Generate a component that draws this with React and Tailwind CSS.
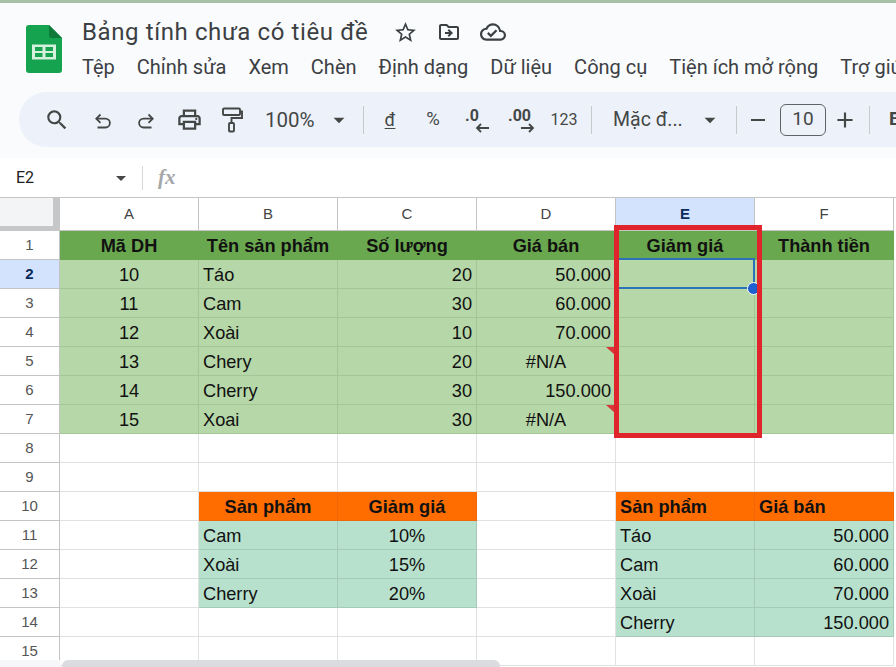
import React from "react";
import { MdSearch, MdOutlinePrint, MdStarBorder, MdOutlineDriveFileMove, MdOutlineCloudDone, MdArrowDropDown, MdRemove, MdAdd } from "react-icons/md";

const ui = "font-['Roboto','Noto_Sans',sans-serif]";
const G = "bg-[#6aa84f] border-[#6aa84f]";
const L = "bg-[#b6d7a8] border-[#a3c696]";
const O = "bg-[#ff6d01] border-[#f0660a]";
const M = "bg-[#b7e1cd] border-[#a4cbb8]";
const W = "bg-white border-[#e1e1e1]";

const c = (t, bg = W, al = "l", b = false) => ({ t, bg, al, b });
const e = { t: "", bg: W, al: "l", b: false };
const rows = [
  [c("Mã DH", G, "c", 1), c("Tên sản phẩm", G, "c", 1), c("Số lượng", G, "c", 1), c("Giá bán", G, "c", 1), c("Giảm giá", G, "c", 1), c("Thành tiền", G, "c", 1)],
  [c("10", L, "c"), c("Táo", L), c("20", L, "r"), c("50.000", L, "r"), c("", L), c("", L)],
  [c("11", L, "c"), c("Cam", L), c("30", L, "r"), c("60.000", L, "r"), c("", L), c("", L)],
  [c("12", L, "c"), c("Xoài", L), c("10", L, "r"), c("70.000", L, "r"), c("", L), c("", L)],
  [c("13", L, "c"), c("Chery", L), c("20", L, "r"), c("#N/A", L, "c"), c("", L), c("", L)],
  [c("14", L, "c"), c("Cherry", L), c("30", L, "r"), c("150.000", L, "r"), c("", L), c("", L)],
  [c("15", L, "c"), c("Xoai", L), c("30", L, "r"), c("#N/A", L, "c"), c("", L), c("", L)],
  [e, e, e, e, e, e],
  [e, e, e, e, e, e],
  [e, c("Sản phẩm", O, "c", 1), c("Giảm giá", O, "c", 1), e, c("Sản phẩm", O, "l", 1), c("Giá bán", O, "l", 1)],
  [e, c("Cam", M), c("10%", M, "c"), e, c("Táo", M), c("50.000", M, "r")],
  [e, c("Xoài", M), c("15%", M, "c"), e, c("Cam", M), c("60.000", M, "r")],
  [e, c("Cherry", M), c("20%", M, "c"), e, c("Xoài", M), c("70.000", M, "r")],
  [e, e, e, e, c("Cherry", M), c("150.000", M, "r")],
  [e, e, e, e, e, e],
];

function Logo() {
  return (
    <svg width="36" height="48" viewBox="0 0 36 48" className="shrink-0">
      <path d="M3 0H23L36 13V45a3 3 0 0 1-3 3H3a3 3 0 0 1-3-3V3a3 3 0 0 1 3-3Z" fill="#16a34f" />
      <path d="M23 0L36 13H26a3 3 0 0 1-3-3Z" fill="#0f7a3a" />
      <path d="M6 19.500H30V34.500H6ZM9 22V26H16.500V22ZM19.500 22V26H27V22ZM9 28V32H16.500V28ZM19.500 28V32H27V28Z" fill="#d5f0dd" fillRule="evenodd" />
    </svg>
  );
}
const Sep = ({ cls = "" }) => <div className={"w-px h-[28px] bg-[#c7c9cc] shrink-0 " + cls} />;
const Slot = ({ children, w = "w-[43px]" }) => <div className={"h-full flex items-center justify-center shrink-0 text-[#444746] " + w}>{children}</div>;

function Undo({ flip }) {
  return (
    <svg width="20" height="20" viewBox="0 0 20 20" fill="none" stroke="#444746" strokeWidth="1.800" className={"translate-y-[1px] " + (flip ? "-scale-x-100" : "")}>
      <path d="M7.500 3.500L3.300 7.700L7.500 11.900" />
      <path d="M3.500 7.700H12.500a4.300 4.300 0 0 1 0 8.800H4.500" />
    </svg>
  );
}
function Roller() {
  return (
    <svg width="22" height="26" viewBox="0 0 22 26" fill="none" stroke="#444746" strokeWidth="1.900">
      <rect x="2" y="1.500" width="17" height="6.500" rx="1" />
      <path d="M19 4.500H21V11H10.500V16" />
      <rect x="8" y="16" width="5" height="8.500" rx="1" />
    </svg>
  );
}
function Dec({ label, right }) {
  return (
    <div className="relative w-[30px] h-[30px] text-[#444746]">
      <span className={"absolute top-0 font-bold text-[16px] leading-[22px] " + (right ? "left-[4px]" : "left-[5px]")}>{label}</span>
      <svg width="14" height="10" viewBox="0 0 14 10" className={"absolute top-[18px] " + (right ? "left-[17px]" : "left-[15px]")} fill="none" stroke="#444746" strokeWidth="1.800">
        {right ? <path d="M0 5H12M8 1L12 5L8 9" /> : <path d="M14 5H2M6 1L2 5L6 9" />}
      </svg>
    </div>
  );
}

function Chrome() {
  return (
    <div className={"h-[158px] bg-[#f9fbfd] border-t-[3px] border-[#a9c2a7] overflow-hidden " + ui}>
      <div className="flex h-[89px]">
        <div className="w-[82px] pl-[26px] pt-[22px] shrink-0"><Logo /></div>
        <div className="flex flex-col whitespace-nowrap text-[#3c4043]">
          <div className="flex items-center h-[34px] mt-[12px]">
            <span className="text-[24px] leading-none tracking-[0.6px] w-[286px]">Bảng tính chưa có tiêu đề</span>
            <MdStarBorder className="ml-[25px] text-[#3c4043]" size={25} />
            <MdOutlineDriveFileMove className="ml-[19px]" size={24} />
            <MdOutlineCloudDone className="ml-[19px]" size={26} />
          </div>
          <div className="flex text-[20px] leading-[24px] mt-[6px] gap-[22px]">
            <span>Tệp</span><span>Chỉnh sửa</span><span>Xem</span><span>Chèn</span><span>Định dạng</span><span>Dữ liệu</span><span>Công cụ</span><span>Tiện ích mở rộng</span><span>Trợ giúp</span>
          </div>
        </div>
      </div>
      <div className="ml-[19px] h-[55px] bg-[#edf2fa] rounded-l-[28px] flex items-center pl-[16px] overflow-hidden whitespace-nowrap text-[#444746]">
        <Slot><MdSearch size={26} /></Slot>
        <Slot w="w-[50px]"><Undo /></Slot>
        <Slot w="w-[36px]"><Undo flip /></Slot>
        <Slot w="w-[50px]"><MdOutlinePrint size={27} /></Slot>
        <Slot w="w-[36px]"><Roller /></Slot>
        <span className="text-[20.500px] w-[52px] shrink-0 ml-[15px] pt-[2px]">100%</span>
        <MdArrowDropDown size={26} className="ml-[9px] shrink-0" />
        <Sep cls="ml-[11px]" />
        <Slot w="w-[52px]"><span className="text-[18px] underline underline-offset-2">đ</span></Slot>
        <Slot w="w-[34px]"><span className="text-[18.500px]">%</span></Slot>
        <Slot w="w-[50px]"><Dec label=".0" /></Slot>
        <Slot w="w-[38px]"><Dec label=".00" right /></Slot>
        <Slot w="w-[52px]"><span className="text-[16px]">123</span></Slot>
        <Sep cls="ml-[1px]" />
        <span className="text-[19.500px] ml-[21px] w-[74px] shrink-0">Mặc đ...</span>
        <MdArrowDropDown size={26} className="ml-[10px] shrink-0" />
        <Sep cls="ml-[13px]" />
        <MdRemove size={24} className="ml-[9px] shrink-0" />
        <div className="ml-[10px] w-[46px] h-[32px] border border-[#5f6368] rounded-[6px] flex items-center justify-center text-[19px] shrink-0">10</div>
        <MdAdd size={26} className="ml-[6px] shrink-0" />
        <Sep cls="ml-[11px]" />
        <span className="ml-[19px] font-bold text-[19px]">B</span>
      </div>
    </div>
  );
}

function Formula() {
  return (
    <div className={"h-[39px] bg-white flex items-center " + ui}>
      <span className="ml-[16px] w-[90px] text-[16px] text-[#202124]">E2</span>
      <MdArrowDropDown size={24} className="text-[#444746] ml-[3px]" />
      <div className="ml-[9px] w-px h-[24px] bg-[#d5d7da]" />
      <span className="ml-[15px] font-['Liberation_Serif',serif] italic font-bold text-[21px] text-[#a5a7a9]">fx</span>
    </div>
  );
}

function ColHead() {
  return (
    <div className="grid grid-cols-[60px_repeat(6,139px)] h-[34px] border-t border-[#c4c4c4] text-[15px] text-[#444] font-['Liberation_Sans',sans-serif]">
      <div className="bg-[#f3f4f5] border-r-[7px] border-b-[5px] border-[#c6c7c8]" />
      {["A", "B", "C", "D", "E", "F"].map((l) => (
        <div key={l} className={"flex items-center justify-center border-r border-b border-[#c4c4c4] " + (l === "E" ? "bg-[#d3e3fd] font-bold text-[#0b2a5c]" : "bg-white")}>{l}</div>
      ))}
    </div>
  );
}

function Grid() {
  return (
    <div className="font-['Liberation_Sans',sans-serif] text-[18.200px] text-[#111]">
      {rows.map((r, i) => (
        <div key={i} className="grid grid-cols-[60px_repeat(6,139px)] h-[29px]">
          <div className={"flex items-center justify-center border-r border-b border-[#c4c4c4] text-[15px] " + (i === 1 ? "bg-[#d3e3fd] font-bold text-[#0b2a5c]" : "bg-white text-[#555]")}>{i + 1}</div>
          {r.map((x, j) => (
            <div key={j} className={"relative flex items-center border-r border-b overflow-hidden whitespace-nowrap px-[4px] pt-[4px] " + x.bg + (x.al === "c" ? " justify-center" : x.al === "r" ? " justify-end" : " justify-start") + (x.b ? " font-bold" : "")}>
              <span>{x.t}</span>
            </div>
          ))}
        </div>
      ))}
    </div>
  );
}

function Tri({ top }) {
  return <div className={"absolute left-[606px] w-0 h-0 border-l-[9px] border-l-transparent border-t-[8px] border-t-[#d9373a] " + top} />;
}

export default function App() {
  return (
    <div className="relative w-[896px] h-[667px] bg-white overflow-hidden">
      <Chrome />
      <Formula />
      <ColHead />
      <Grid />
      <Tri top="top-[347px]" />
      <Tri top="top-[405px]" />
      <div className="absolute left-[615px] top-[258px] w-[140px] h-[31px] border-2 border-[#2d72b8]" />
      <div className="absolute left-[747px] top-[282px] w-[13px] h-[13px] rounded-full bg-[#1f5fd0] border border-white" />
      <div className="absolute left-[614px] top-[225px] w-[148px] h-[213px] border-[5px] border-[#e0242c]" />
      <div className="absolute left-0 top-[660px] w-[60px] h-[7px] bg-[#f6f7f8]" />
      <div className="absolute left-[62px] top-[660px] w-[438px] h-[7px] bg-[#dadce0] rounded-t-[6px]" />
    </div>
  );
}
